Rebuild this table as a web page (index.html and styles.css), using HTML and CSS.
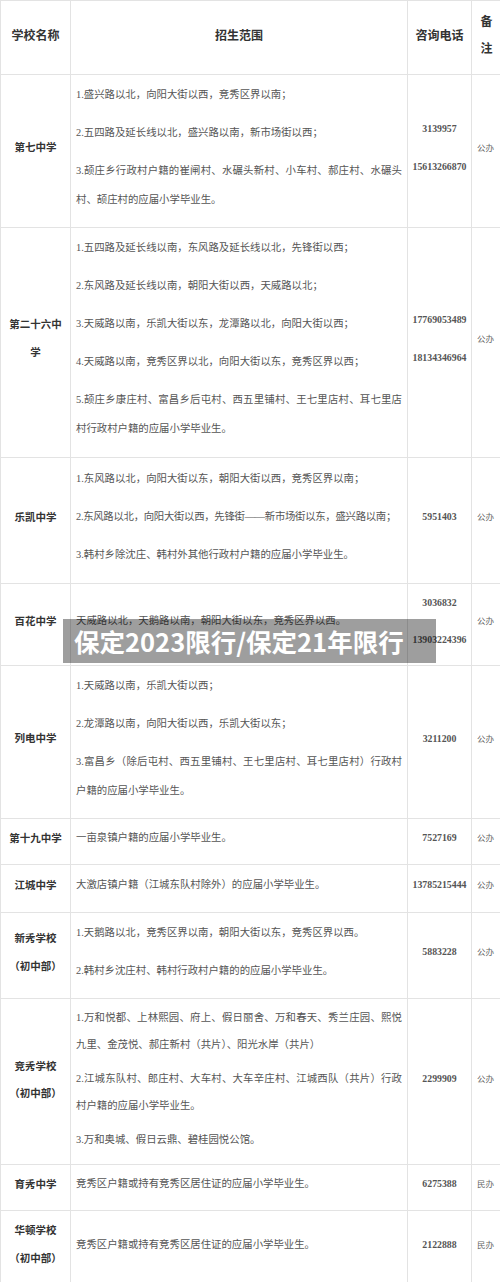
FILE: index.html
```html
<!DOCTYPE html>
<html lang="zh-CN">
<head>
<meta charset="utf-8">
<title>保定2023限行/保定21年限行</title>
<link rel="stylesheet" href="styles.css">
</head>
<body>
<table class="sheet">
  <colgroup>
    <col class="c-name"><col class="c-scope"><col class="c-phone"><col class="c-note">
  </colgroup>
  <thead>
    <tr>
      <th><p>学校名称</p></th>
      <th><p>招生范围</p></th>
      <th><p>咨询电话</p></th>
      <th><p>备注</p></th>
    </tr>
  </thead>
  <tbody>
    <tr>
      <td class="name"><p>第七中学</p></td>
      <td class="scope">
        <p>1.盛兴路以北，向阳大街以西，竞秀区界以南；</p>
        <p>2.五四路及延长线以北，盛兴路以南，新市场街以西；</p>
        <p>3.颉庄乡行政村户籍的崔闸村、水碾头新村、小车村、郝庄村、水碾头<span class="keep">村、颉</span>庄村的应届小学毕业生。</p>
      </td>
      <td class="phone"><p>3139957</p><p>15613266870</p></td>
      <td class="note"><p>公办</p></td>
    </tr>
    <tr class="plus1">
      <td class="name"><p>第二十六中学</p></td>
      <td class="scope">
        <p>1.五四路及延长线以南，东风路及延长线以北，先锋街以西；</p>
        <p>2.东风路及延长线以南，朝阳大街以西，天威路以北；</p>
        <p>3.天威路以南，乐凯大街以东，龙潭路以北，向阳大街以西；</p>
        <p>4.天威路以南，竞秀区界以北，向阳大街以东，竞秀区界以西；</p>
        <p>5.颉庄乡康庄村、富昌乡后屯村、西五里铺村、王七里店村、耳七里店村行政村户籍的应届小学毕业生。</p>
      </td>
      <td class="phone"><p>17769053489</p><p>18134346964</p></td>
      <td class="note"><p>公办</p></td>
    </tr>
    <tr class="plus2">
      <td class="name"><p>乐凯中学</p></td>
      <td class="scope">
        <p>1.东风路以北，向阳大街以东，朝阳大街以西，竞秀区界以南；</p>
        <p class="condensed">2.东风路以北，向阳大街以西，先锋街——新市场街以东，盛兴路以南；</p>
        <p>3.韩村乡除沈庄、韩村外其他行政村户籍的应届小学毕业生。</p>
      </td>
      <td class="phone"><p>5951403</p></td>
      <td class="note"><p>公办</p></td>
    </tr>
    <tr>
      <td class="name"><p>百花中学</p></td>
      <td class="scope"><p>天威路以北，天鹅路以南，朝阳大街以东，竞秀区界以西。</p></td>
      <td class="phone phone-pair"><p>3036832</p><p>13903224396</p></td>
      <td class="note"><p>公办</p></td>
    </tr>
    <tr>
      <td class="name"><p>列电中学</p></td>
      <td class="scope">
        <p>1.天威路以南，乐凯大街以西；</p>
        <p>2.龙潭路以南，向阳大街以西，乐凯大街以东；</p>
        <p>3.富昌乡（除后屯村、西五里铺村、王七里店村、耳七里店村）行政村户籍的应届小学毕业生。</p>
      </td>
      <td class="phone"><p>3211200</p></td>
      <td class="note"><p>公办</p></td>
    </tr>
    <tr class="short">
      <td class="name"><p>第十九中学</p></td>
      <td class="scope"><p>一亩泉镇户籍的应届小学毕业生。</p></td>
      <td class="phone"><p>7527169</p></td>
      <td class="note"><p>公办</p></td>
    </tr>
    <tr>
      <td class="name"><p>江城中学</p></td>
      <td class="scope"><p>大激店镇户籍（江城东队村除外）的应届小学毕业生。</p></td>
      <td class="phone"><p>13785215444</p></td>
      <td class="note"><p>公办</p></td>
    </tr>
    <tr>
      <td class="name"><p>新秀学校（初中部）</p></td>
      <td class="scope">
        <p>1.天鹅路以北，竞秀区界以南，朝阳大街以东，竞秀区界以西。</p>
        <p>2.韩村乡沈庄村、韩村行政村户籍的的应届小学毕业生。</p>
      </td>
      <td class="phone"><p>5883228</p></td>
      <td class="note"><p>公办</p></td>
    </tr>
    <tr class="tight">
      <td class="name"><p>竞秀学校（初中部）</p></td>
      <td class="scope">
        <p>1.万和悦都、上林熙园、府上、假日丽舍、万和春天、秀兰庄园、熙悦九里、金茂悦、郝庄新村（共片）、阳光水岸（共片）</p>
        <p>2.江城东队村、郎庄村、大车村、大车辛庄村、江城西队（共片）行政村户籍的应届小学毕业生。</p>
        <p>3.万和奥城、假日云鼎、碧桂园悦公馆。</p>
      </td>
      <td class="phone"><p>2299909</p></td>
      <td class="note"><p>公办</p></td>
    </tr>
    <tr class="short">
      <td class="name"><p>育秀中学</p></td>
      <td class="scope"><p>竞秀区户籍或持有竞秀区居住证的应届小学毕业生。</p></td>
      <td class="phone"><p>6275388</p></td>
      <td class="note"><p>民办</p></td>
    </tr>
    <tr>
      <td class="name"><p>华顿学校（初中部）</p></td>
      <td class="scope"><p>竞秀区户籍或持有竞秀区居住证的应届小学毕业生。</p></td>
      <td class="phone"><p>2122888</p></td>
      <td class="note"><p>民办</p></td>
    </tr>
  </tbody>
</table>
<div class="banner">保定2023限行/保定21年限行</div>
</body>
</html>
```

FILE: styles.css
```css
* { box-sizing: border-box; }
html, body {
  margin: 0;
  padding: 0;
  background: #fff;
  overflow: hidden;
}
body {
  width: 500px;
  position: relative;
  font-family: "Liberation Serif", "Noto Sans CJK SC", serif;
}
.sheet {
  width: 501px;
  border-collapse: collapse;
  table-layout: fixed;
}
.c-name { width: 70px; }
.c-scope { width: 337px; }
.c-phone { width: 64px; }
.c-note { width: 30px; }

.sheet th,
.sheet td {
  border: 1px solid #e3e3e3;
  padding: 5px 5px 4px;
  vertical-align: middle;
}
.sheet p {
  margin: 0 0 9px;
  line-height: 29px;
}
.sheet th {
  padding: 6px 5px 4px;
  font-family: "Noto Sans CJK SC", sans-serif;
  font-size: 12px;
  font-weight: bold;
  color: #333;
  text-align: center;
}
.sheet th p { line-height: 27px; }

.name {
  text-align: center;
  font-family: "Noto Sans CJK SC", sans-serif;
  font-weight: bold;
  font-size: 10.5px;
  color: #333;
}
.sheet .name p { line-height: 28px; }

.scope {
  font-size: 10.4px;
  color: #555;
  text-align: justify;
}
.keep { white-space: nowrap; }
.condensed { letter-spacing: -0.3px; }

.sheet td.phone {
  padding-left: 3px;
  padding-right: 3px;
  text-align: center;
  font-weight: bold;
  font-size: 9.8px;
  color: #555;
}
.sheet .phone-pair p { line-height: 28px; }
.sheet .phone-pair p:last-child { margin-bottom: 7px; }

.note {
  font-family: "Noto Sans CJK SC", sans-serif;
  font-size: 8.5px;
  color: #666;
}

.sheet .short td { padding-top: 4px; padding-bottom: 3px; }
.sheet .plus1 td { padding-bottom: 5px; }
.sheet .plus2 td { padding-top: 6px; padding-bottom: 5px; }
.sheet .tight p { margin-bottom: 7px; line-height: 27px; }

.banner {
  position: absolute;
  left: 63px;
  top: 619px;
  width: 373px;
  height: 44px;
  padding: 0 11px;
  background: rgba(0, 0, 0, 0.38);
  color: #fff;
  font-family: "Noto Sans CJK SC", sans-serif;
  font-weight: bold;
  font-size: 25.5px;
  line-height: 44px;
  white-space: nowrap;
}
```
